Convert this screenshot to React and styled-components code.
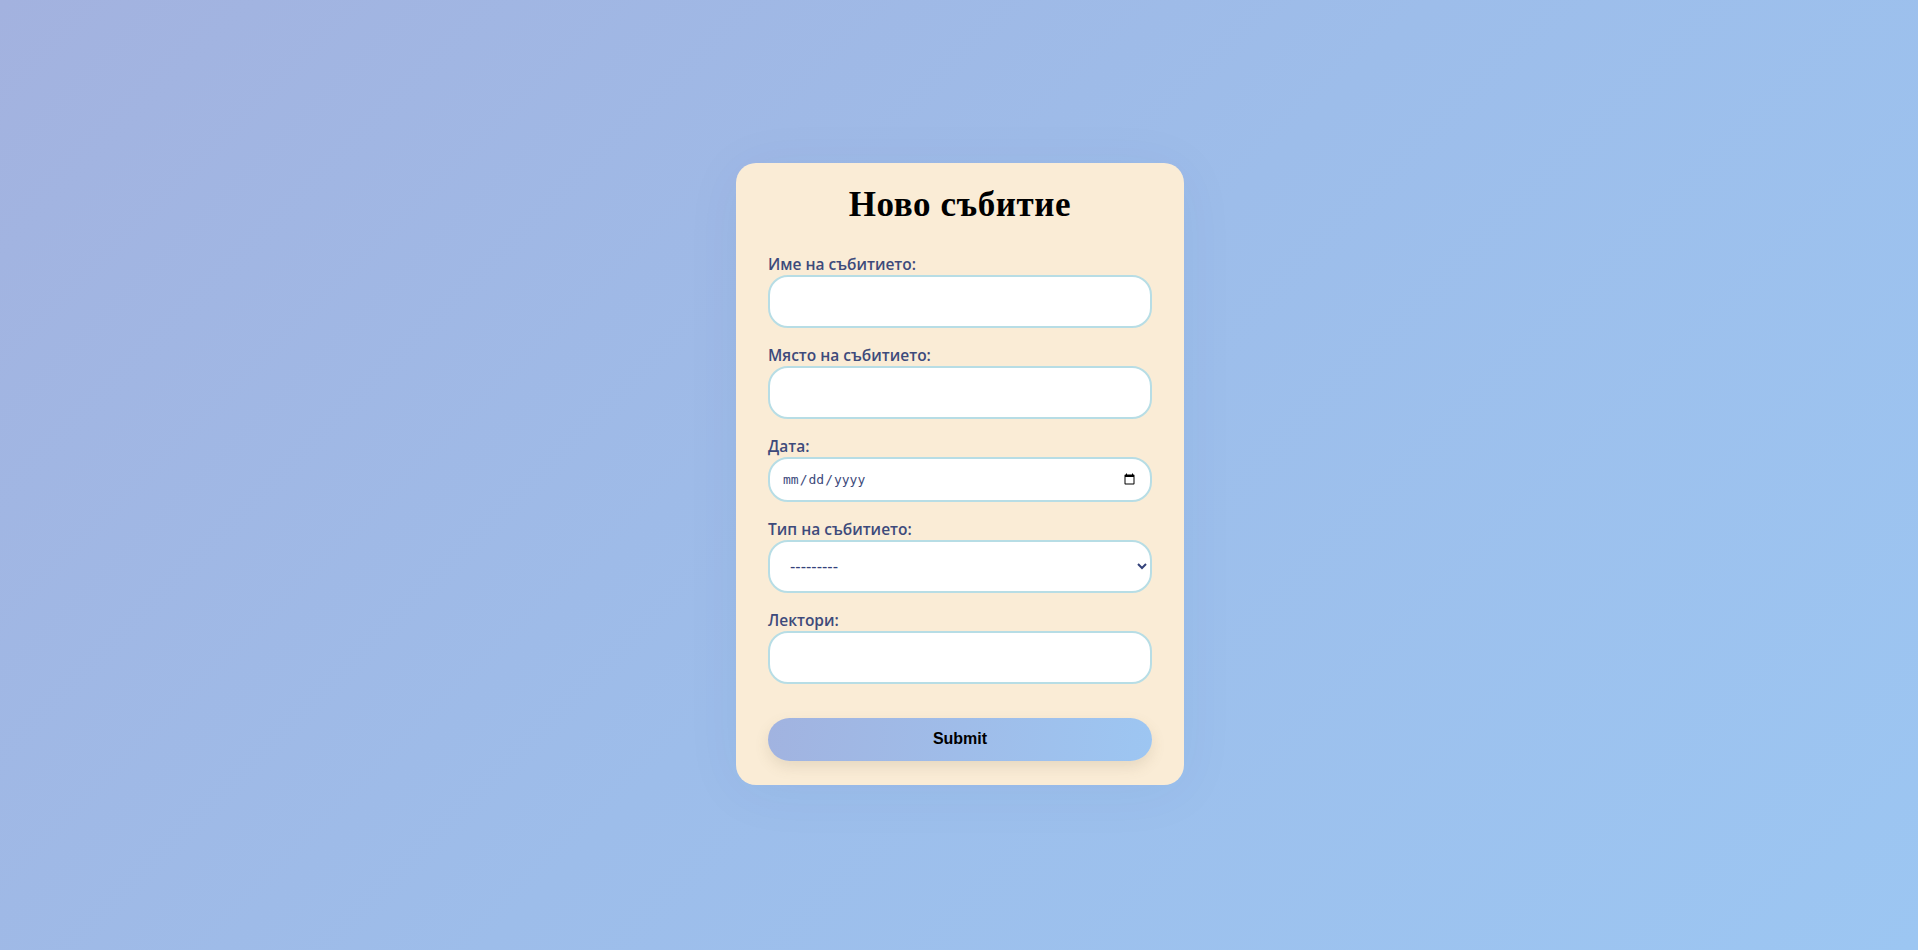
import React from "react";
import styled, { createGlobalStyle } from "styled-components";

const Global = createGlobalStyle`
  html, body { margin: 0; padding: 0; }
  body {
    min-height: 100vh;
    background: linear-gradient(135deg, #a3b2df 0%, #9dbdea 50%, #9cc6f2 100%);
    font-family: "Open Sans", "Noto Sans", sans-serif;
  }
`;

const Page = styled.div`
  min-height: 950px;
  display: flex;
  align-items: center;
  justify-content: center;
  box-sizing: border-box;
  padding: 0 0 3px 2px;
`;

const Card = styled.form`
  width: 448px;
  box-sizing: border-box;
  background: #faecd6;
  border-radius: 20px;
  padding: 23px 32px 24px;
  box-shadow: 0 6px 60px rgba(40, 60, 120, 0.05);
  display: flex;
  flex-direction: column;
`;

const Title = styled.h2`
  margin: 0 0 30px;
  text-align: center;
  font-family: "Liberation Serif", "Times New Roman", serif;
  font-weight: 700;
  font-size: 35px;
  letter-spacing: 0.6px;
  line-height: 38px;
  color: #000;
`;

const Group = styled.div`
  display: flex;
  flex-direction: column;
  margin-bottom: 17px;
`;

const Label = styled.label`
  display: block;
  font-family: "Open Sans", "Noto Sans", sans-serif;
  font-weight: 600;
  font-size: 15.5px;
  line-height: 20px;
  color: #3d4a7b;
  margin-bottom: 1px;
`;

const Field = styled.input`
  box-sizing: border-box;
  width: 100%;
  height: ${(p) => p.$h || 53}px;
  border: 2px solid #b7dde5;
  border-radius: 20px;
  background: #fff;
  padding: 0 12px;
  font-family: "DejaVu Sans Mono", monospace;
  font-size: 13px;
  color: #3d4a7b;
  outline: none;
`;

const Select = styled.select`
  box-sizing: border-box;
  width: 100%;
  height: 53px;
  border: 2px solid #b7dde5;
  border-radius: 20px;
  background: #fff;
  padding: 0 16px;
  font-family: "Liberation Sans", Arial, sans-serif;
  font-size: 16px;
  color: #34427a;
  outline: none;
`;

const Submit = styled.button`
  margin-top: 17px;
  height: 43px;
  width: 100%;
  border: none;
  border-radius: 22px;
  background: linear-gradient(100deg, #a1b3e0 0%, #9dc6f2 100%);
  box-shadow: 0 6px 14px rgba(120, 110, 80, 0.15);
  font-family: "Liberation Sans", Arial, sans-serif;
  font-weight: 700;
  font-size: 16px;
  color: #000;
  cursor: pointer;
`;

export default function App() {
  return (
    <>
      <Global />
      <Page>
        <Card onSubmit={(e) => e.preventDefault()}>
          <Title>Ново събитие</Title>
          <Group>
            <Label htmlFor="name">Име на събитието:</Label>
            <Field id="name" type="text" />
          </Group>
          <Group>
            <Label htmlFor="place">Място на събитието:</Label>
            <Field id="place" type="text" />
          </Group>
          <Group>
            <Label htmlFor="date">Дата:</Label>
            <Field id="date" type="date" $h={45} />
          </Group>
          <Group>
            <Label htmlFor="type">Тип на събитието:</Label>
            <Select id="type" defaultValue="">
              <option value="">---------</option>
              <option value="lecture">Лекция</option>
              <option value="seminar">Семинар</option>
            </Select>
          </Group>
          <Group>
            <Label htmlFor="lecturers">Лектори:</Label>
            <Field id="lecturers" type="text" />
          </Group>
          <Submit type="submit">Submit</Submit>
        </Card>
      </Page>
    </>
  );
}
